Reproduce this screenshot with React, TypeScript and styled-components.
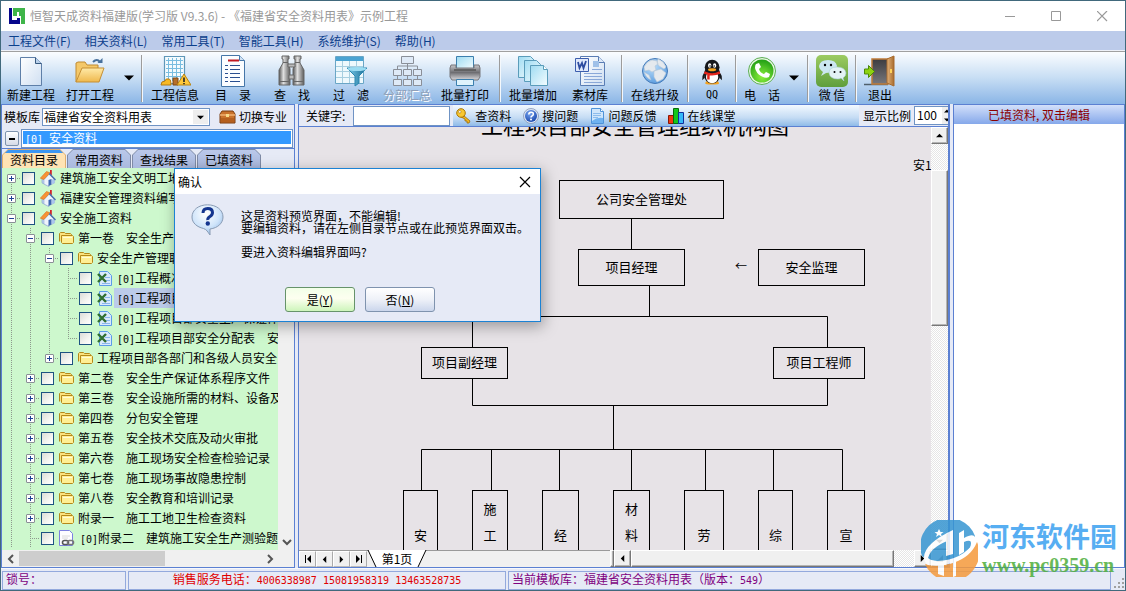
import React from "react";
import styled, { createGlobalStyle, css } from "styled-components";

const BLUE = "#5b80d2";
const FACE = "#e6eaf6";
const GRAY = "#f0f0f0";

const Global = createGlobalStyle`
  *, *::before, *::after { box-sizing: border-box; }
  body { margin: 0; }
  body, button, input, select {
    font-family: "Noto Sans CJK SC", "Liberation Sans", sans-serif;
    font-size: 12px;
    line-height: 16px;
    color: #000;
  }
  button { margin: 0; padding: 0; border: 0; background: none; }
  ul { list-style: none; margin: 0; padding: 0; }
  svg { display: block; flex: none; }
`;

/* ---------- window frame ---------- */
const Window = styled.div`
  position: relative;
  display: flex;
  flex-direction: column;
  min-height: 100vh;
  border: 1px solid #41697c;
  background: ${FACE};
  overflow: hidden;
  white-space: nowrap;
`;
const TitleBar = styled.header`
  display: flex;
  align-items: center;
  height: 30px;
  padding-left: 8px;
  background: #fff;
  color: #999;
`;
const TitleText = styled.h1`
  flex: 1;
  margin: 0 0 0 5px;
  font-size: 12px;
  font-weight: 400;
`;
const CaptionButton = styled.button`
  display: flex;
  align-items: center;
  justify-content: center;
  width: 46px;
  height: 28px;
`;
const MenuBar = styled.nav`
  display: flex;
  align-items: center;
  gap: 14px;
  height: 19px;
  padding-left: 7px;
  background: #bccbea;
  button { color: #0c408c; }
`;
const Toolbar = styled.div`
  display: flex;
  height: 54px;
  padding-left: 1px;
  border-top: 1px solid #eef1f8;
  background: linear-gradient(#a0a0a0 1px, #fbfdff 1px, #c8def4 50%, #8ab5e6);
`;
const ToolButton = styled.button<{ $w: number }>`
  display: flex;
  flex-direction: column;
  align-items: center;
  flex: none;
  width: ${(p) => p.$w}px;
  padding-top: 4px;
  &:disabled { color: #8f9fb8; text-shadow: 1px 1px 0 #fff; }
`;
const DropButton = styled.button<{ $w: number }>`
  display: flex;
  align-items: center;
  justify-content: center;
  width: ${(p) => p.$w}px;
`;
const Separator = styled.span`
  width: 2px;
  height: 47px;
  margin: 4px 3px 0;
  background: linear-gradient(90deg, #9c9c9c 50%, #f4f8fc 50%);
`;

/* ---------- body ---------- */
const Body = styled.div`
  flex: 1;
  display: grid;
  grid-template-columns: 294px minmax(0, 1fr) 172px;
  column-gap: 3px;
`;
const Panel = styled.section<{ $thick?: boolean }>`
  display: flex;
  flex-direction: column;
  min-width: 0;
  border: 1px solid ${BLUE};
  border-right-width: ${(p) => (p.$thick ? 2 : 1)}px;
`;
const TemplateRow = styled.div`
  display: flex;
  align-items: center;
  height: 24px;
  padding-left: 2px;
`;
const SelectBox = styled.span`
  position: relative;
  width: 168px;
  margin: 0 9px 0 2px;
  select {
    display: block;
    width: 100%;
    height: 18px;
    padding: 0 0 1px 1px;
    border: 1px solid #6f93c4;
    background: #fff;
    appearance: none;
    border-radius: 0;
    outline: 0;
  }
`;
const SelectArrow = styled.span`
  position: absolute;
  right: 2px;
  top: 2px;
  display: flex;
  align-items: center;
  justify-content: center;
  width: 15px;
  height: 14px;
  background: #eee;
  pointer-events: none;
`;
const LinkButton = styled.button`
  display: flex;
  align-items: center;
  gap: 3px;
`;
const LibraryRow = styled.div`
  display: flex;
  height: 19px;
  padding: 0 1px 0 3px;
  gap: 2px;
`;
const CollapseButton = styled.button`
  display: flex;
  align-items: center;
  justify-content: center;
  width: 14px;
  height: 15px;
  margin-top: 2px;
  border: 1px solid #7e93ad;
  border-radius: 2px;
  background: linear-gradient(#fff, #d5dbe8);
`;
const LibraryList = styled.ul`
  flex: 1;
  padding: 1px;
  border: 1px solid #6f93c4;
  background: #fff;
  li {
    height: 13px;
    padding-left: 2px;
    line-height: 13px;
    background: #3399ff;
    color: #fff;
  }
`;
const Tabs = styled.div`
  display: flex;
  gap: 1px;
  height: 20px;
  border-top: 1px solid ${BLUE};
`;
const Tab = styled.button<{ $active?: boolean }>`
  position: relative;
  z-index: 0;
  width: 64px;
  height: 19px;
  padding-top: 2px;
  background: ${(p) => (p.$active ? "#e0b070" : "#7f8ba6")};
  clip-path: polygon(0 6px, 6px 0, 58px 0, 100% 6px, 100% 100%, 0 100%);
  &::before {
    content: "";
    position: absolute;
    z-index: -1;
    inset: 1px 1px 0;
    background: ${(p) =>
      p.$active
        ? "linear-gradient(#3b96f3 3px, #ffe3b4 3px)"
        : "linear-gradient(#bac8ea, #aab9de)"};
    clip-path: polygon(0 5px, 5px 0, 57px 0, 100% 5px, 100% 100%, 0 100%);
  }
`;

/* ---------- tree ---------- */
const TreeArea = styled.div`
  flex: 1;
  display: flex;
  min-height: 382px;
`;
const Tree = styled.ul`
  flex: 1;
  min-width: 0;
  overflow: hidden;
  background: #cdf8cd;
`;
const TreeRow = styled.li`
  display: flex;
  align-items: center;
  height: 20px;
`;
const dots = "repeating-linear-gradient(#8d9a8d 0 1px, transparent 1px 2px)";
const dotsX = "repeating-linear-gradient(90deg, #8d9a8d 0 1px, transparent 1px 2px)";
const Guide = styled.span<{ $part?: "full" | "top" | "bottom"; $own?: boolean }>`
  display: flex;
  align-items: center;
  justify-content: center;
  flex: none;
  width: 19px;
  height: 20px;
  background:
    ${dots} 9px ${(p) => (p.$part === "bottom" ? "10px" : "0")} / 1px
      ${(p) => (p.$part === "full" || !p.$part ? "20px" : "10px")} no-repeat
    ${(p) => p.$own && css`, ${dotsX} 9px 10px / 10px 1px no-repeat`};
`;
const Expander = styled.button`
  display: flex;
  align-items: center;
  justify-content: center;
  width: 9px;
  height: 9px;
  border: 1px solid #8a8f96;
  border-radius: 1px;
  background: #fff;
`;
const NodeLabel = styled.label`
  display: flex;
  align-items: center;
  height: 20px;
`;
const Check = styled.input`
  appearance: none;
  flex: none;
  width: 13px;
  height: 13px;
  margin: 0 5px 0 1px;
  border: 1px solid #1d5281;
  background: linear-gradient(135deg, #dcdcd7, #f4f4f1 60%, #fff);
`;
const NodeText = styled.span<{ $selected?: boolean; $leaf?: boolean }>`
  height: 20px;
  margin-left: ${(p) => (p.$leaf ? 2 : 4)}px;
  padding: 0 3px 0 ${(p) => (p.$leaf ? 3 : 0)}px;
  line-height: 20px;
  background: ${(p) => (p.$selected ? "#bccbea" : "none")};
`;
const Num = styled.span`
  font-family: "DejaVu Sans Mono", monospace;
  font-size: 10px;
`;
const FlatScroll = styled.div<{ $vertical?: boolean }>`
  display: flex;
  flex-direction: ${(p) => (p.$vertical ? "column" : "row")};
  justify-content: ${(p) => (p.$vertical ? "flex-end" : "flex-start")};
  flex: none;
  width: ${(p) => (p.$vertical ? "16px" : "auto")};
  height: ${(p) => (p.$vertical ? "auto" : "17px")};
  padding-right: ${(p) => (p.$vertical ? 0 : 16)}px;
  background: ${GRAY};
`;
const FlatArrow = styled.button`
  display: flex;
  align-items: center;
  justify-content: center;
  width: 17px;
  height: 17px;
`;
const FlatThumb = styled.span`
  width: 146px;
  height: 15px;
  margin: 1px auto 0 0;
  background: #cdcdcd;
`;

/* ---------- preview ---------- */
const FilterRow = styled.div`
  display: flex;
  height: 22px;
  border-bottom: 1px solid ${BLUE};
  overflow: hidden;
`;
const FieldLabel = styled.label`
  display: flex;
  align-items: center;
  gap: 8px;
  padding-left: 7px;
`;
const SearchInput = styled.input`
  width: 97px;
  height: 20px;
  margin-right: 3px;
  border: 1px solid #6f93c4;
  background: #fff;
  outline: 0;
`;
const LinkStrip = styled.div`
  flex: 1;
  display: flex;
  align-items: center;
  gap: 12px;
  padding-left: 3px;
  background: linear-gradient(#f3f9ff, #c5dcf4 60%, #8fbbe8);
`;
const ZoomLabel = styled.label`
  display: flex;
  align-items: center;
  gap: 3px;
  padding-left: 4px;
`;
const ZoomBox = styled.span`
  display: flex;
  width: 34px;
  height: 19px;
  border: 1px solid #6f93c4;
  border-right: 0;
  background: #fff;
  overflow: hidden;
  input {
    width: 27px;
    height: 16px;
    padding: 0 0 0 2px;
    border: 0;
    outline: 0;
    background: none;
  }
`;
const Spinner = styled.span`
  display: flex;
  flex-direction: column;
  justify-content: space-around;
  width: 6px;
  padding-left: 2px;
  background: #eee;
`;
const Preview = styled.div`
  flex: 1;
  display: flex;
  min-height: 423px;
`;
const Sheet = styled.div`
  position: relative;
  flex: 1;
  overflow: hidden;
  background: #e7e3e7;
`;
const SheetTitle = styled.h2`
  position: absolute;
  left: 182px;
  top: -14px;
  margin: 0;
  font-size: 22px;
  font-weight: 400;
  line-height: 22px;
`;
const SheetNote = styled.span<{ $x: number; $y: number }>`
  position: absolute;
  left: ${(p) => p.$x}px;
  top: ${(p) => p.$y}px;
  font-size: 12px;
`;
const Wires = styled.svg`
  position: absolute;
  left: 0;
  top: 0;
`;
const OrgNode = styled.div<{ $x: number; $y: number; $w: number; $h: number; $tall?: boolean }>`
  position: absolute;
  left: ${(p) => p.$x}px;
  top: ${(p) => p.$y}px;
  width: ${(p) => p.$w}px;
  height: ${(p) => p.$h}px;
  display: flex;
  flex-direction: column;
  align-items: center;
  justify-content: ${(p) => (p.$tall ? "flex-end" : "center")};
  padding-bottom: 2px;
  border: 1px solid #000;
  font-size: 13px;
  span { height: 26px; line-height: 26px; }
`;
const dither = css`
  background: repeating-conic-gradient(#fff 0 25%, #e6e6e6 0 50%) 0 0 / 2px 2px;
`;
const VScroll = styled.div`
  display: flex;
  flex-direction: column;
  flex: none;
  width: 17px;
  ${dither}
`;
const raised = css`
  border: 1px solid;
  border-color: #fff #777 #777 #fff;
  box-shadow: inset -1px -1px 0 #b4b4b4;
  background: ${GRAY};
`;
const ClassicButton = styled.button`
  display: flex;
  align-items: center;
  justify-content: center;
  flex: none;
  width: 17px;
  height: 17px;
  ${raised}
`;
const VThumb = styled.span`
  height: 156px;
  margin: 26px 0 auto;
  ${raised}
`;
const SheetFooter = styled.div`
  display: flex;
  height: 17px;
`;
const SheetTabs = styled.div`
  display: flex;
  flex: none;
  width: 311px;
  border-top: 1px solid #9a9a9a;
  background: ${GRAY};
  ${ClassicButton} {
    height: 16px;
    border-color: #fff #aaa #bbb #fff;
    box-shadow: none;
  }
`;
const SheetTab = styled.button`
  position: relative;
  width: 60px;
  height: 16px;
  svg { position: absolute; left: 0; top: -1px; }
  span { position: relative; line-height: 16px; }
`;
const SplitGrip = styled.span`
  width: 4px;
  ${raised}
`;
const HTrack = styled.div`
  flex: 1;
  display: flex;
  ${dither}
`;
const HThumb = styled.span`
  width: 263px;
  ${raised}
`;

/* ---------- right panel and status ---------- */
const FilledHeader = styled.h2`
  height: 19px;
  margin: 0;
  font-size: 12px;
  font-weight: 400;
  line-height: 19px;
  text-align: center;
  color: #8b0000;
  background: linear-gradient(#d3e0fa, #85a8ea);
`;
const FilledBody = styled.div`
  flex: 1;
  background: #fff;
`;
const StatusBar = styled.footer`
  display: grid;
  grid-template-columns: 124px 378px minmax(0, 1fr) 12px;
  gap: 2px;
  height: 22px;
  padding: 2px 0 1px 1px;
  border-top: 1px solid #f6f8fc;
`;
const StatusCell = styled.div<{ $color: string; $center?: boolean }>`
  padding: 0 3px;
  border: 1px solid #93a9dd;
  line-height: 14px;
  color: ${(p) => p.$color};
  text-align: ${(p) => (p.$center ? "center" : "left")};
`;

/* ---------- dialog ---------- */
const Dialog = styled.div`
  position: absolute;
  left: 173px;
  top: 167px;
  width: 367px;
  height: 154px;
  border: 1px solid #1b82d4;
  background: ${FACE};
  box-shadow: 2px 4px 14px rgba(0, 0, 0, 0.35);
`;
const DialogTitle = styled.div`
  display: flex;
  align-items: center;
  justify-content: space-between;
  height: 25px;
  padding: 0 9px 0 3px;
  background: #fff;
`;
const DialogContent = styled.div`
  display: flex;
  gap: 17px;
  padding: 10px 0 0 16px;
  p {
    margin: 6px 0 12px;
    line-height: 12px;
  }
  p + p { margin: 0; }
`;
const DialogActions = styled.div`
  display: flex;
  gap: 10px;
  padding: 29px 0 0 110px;
`;
const DialogButton = styled.button<{ $primary?: boolean }>`
  width: 70px;
  height: 25px;
  border: 1px solid ${(p) => (p.$primary ? "#66936a" : "#7f93ae")};
  border-radius: 3px;
  background: ${(p) =>
    p.$primary ? "linear-gradient(#f2ffe8, #fdfff0 45%, #cdf5bb)" : "linear-gradient(#fff, #eef1f8 50%, #cbd6ec)"};
`;

/* ---------- watermark ---------- */
const Watermark = styled.div`
  position: absolute;
  right: 8px;
  bottom: 12px;
  display: flex;
  gap: 4px;
  opacity: 0.85;
  pointer-events: none;
`;
const WatermarkText = styled.div`
  strong {
    display: block;
    font-size: 27px;
    line-height: 32px;
    color: #3aa0f0;
  }
  em {
    display: block;
    font: 700 20px/26px "Liberation Serif", serif;
    color: #4fae3c;
  }
`;

/* ---------- icons ---------- */
const Arrow = ({ d, size = 7, color = "#000" }: { d: "up" | "down" | "left" | "right"; size?: number; color?: string }) => {
  const paths = { up: "M0 6 4 2 8 6z", down: "M0 2h8L4 6z", left: "M6 0v8L2 4z", right: "M2 0v8l4-4z" };
  return (
    <svg width={size} height={size} viewBox="0 0 8 8"><path d={paths[d]} fill={color} /></svg>
  );
};
const Chevron = ({ d }: { d: "down" | "left" | "right" }) => {
  const paths = { down: "M1 3l4 4 4-4", left: "M7 1 3 5l4 4", right: "M3 1l4 4-4 4" };
  return (
    <svg width="10" height="10" viewBox="0 0 10 10"><path d={paths[d]} fill="none" stroke="#555" strokeWidth="2" /></svg>
  );
};

const Defs = () => (
  <svg width="0" height="0" style={{ position: "absolute" }} aria-hidden="true">
    <defs>
      <linearGradient id="paper" x1="0" y1="0" x2="1" y2="1"><stop offset="0" stopColor="#fff" /><stop offset="1" stopColor="#cfdff2" /></linearGradient>
      <linearGradient id="cyan" x1="0" y1="0" x2="1" y2="1"><stop offset="0" stopColor="#9fdcf2" /><stop offset="1" stopColor="#f4fcff" /></linearGradient>
      <linearGradient id="gold" x1="0" y1="0" x2="0" y2="1"><stop offset="0" stopColor="#ffeaa8" /><stop offset="1" stopColor="#efb84c" /></linearGradient>
      <linearGradient id="metal" x1="0" y1="0" x2="1" y2="0"><stop offset="0" stopColor="#555" /><stop offset=".4" stopColor="#e0e0e0" /><stop offset="1" stopColor="#5c5c5c" /></linearGradient>
      <linearGradient id="print" x1="0" y1="0" x2="0" y2="1"><stop offset="0" stopColor="#c8c8cc" /><stop offset=".5" stopColor="#6e6e72" /><stop offset="1" stopColor="#d8d8dc" /></linearGradient>
      <linearGradient id="funnel" x1="0" y1="0" x2="1" y2="0"><stop offset="0" stopColor="#7fd0ee" /><stop offset="1" stopColor="#12668f" /></linearGradient>
      <radialGradient id="globe" cx=".4" cy=".3" r=".7"><stop offset="0" stopColor="#bfe0fb" /><stop offset="1" stopColor="#5f9fe0" /></radialGradient>
      <radialGradient id="green" cx=".5" cy=".75" r=".7"><stop offset="0" stopColor="#8cf03c" /><stop offset="1" stopColor="#27a317" /></radialGradient>
      <linearGradient id="wechat" x1="0" y1="0" x2="0" y2="1"><stop offset="0" stopColor="#9ccb62" /><stop offset="1" stopColor="#5f9e3c" /></linearGradient>
      <linearGradient id="wood" x1="0" y1="0" x2="1" y2="0"><stop offset="0" stopColor="#e2b27a" /><stop offset="1" stopColor="#a86c2e" /></linearGradient>
      <linearGradient id="dark" x1="0" y1="0" x2="0" y2="1"><stop offset="0" stopColor="#3c3c40" /><stop offset="1" stopColor="#77777c" /></linearGradient>
      <radialGradient id="bubble" cx=".45" cy=".3" r=".75"><stop offset="0" stopColor="#fff" /><stop offset=".6" stopColor="#cfe4fa" /><stop offset="1" stopColor="#8bb4e2" /></radialGradient>
      <radialGradient id="help" cx=".4" cy=".3" r=".7"><stop offset="0" stopColor="#7aa6f0" /><stop offset="1" stopColor="#1c4bb0" /></radialGradient>
    </defs>
  </svg>
);

const Icon32 = ({ children }: { children: React.ReactNode }) => (
  <svg width="32" height="32" viewBox="0 0 32 32">{children}</svg>
);

const icons: Record<string, React.ReactNode> = {
  newFile: <><path d="M5.500 2.500h15l6 6v22h-21z" fill="url(#paper)" stroke="#5e7fa8" /><path d="M20.500 2.500v6h6" fill="#b9d0ea" stroke="#37597f" /></>,
  open: <><path d="M2 27V8l2-1h7l2 3h11v4" fill="#f4c869" stroke="#c08a30" /><path d="M2 27l6-14h22l-5 14z" fill="url(#gold)" stroke="#c58f35" /><path d="M19 7q4-4 7 0" fill="none" stroke="#47709c" strokeWidth="2" /><path d="M23.500 8h5V3z" fill="#47709c" /></>,
  info: <><path d="M5.500 1.500h20v27h-20z" fill="#f4fbfe" stroke="#5f97b8" strokeWidth="1.200" /><path d="M7 5.500h17M7 9.500h17M7 13.500h17M7 17.500h17M7 21.500h17M9.500 3v23M13.500 3v23M17.500 3v23M21.500 3v23" stroke="#79bde0" /><path d="M2 30q0-4 4-4 1-3 3-2 3-1 3 6z" fill="#f7b924" stroke="#b57a10" /><path d="M14 23h5v7h-5z" fill="#b56f2a" stroke="#7d4716" /><path d="M25 19l7 11H18z" fill="#ffc83a" stroke="#b8820e" /><path d="M25 22.500v4.500M25 28v1.200" stroke="#222" strokeWidth="1.600" /></>,
  list: <><path d="M4.500.500h18l5 5v26h-23z" fill="#fbfdff" stroke="#4576a8" /><path d="M22.500.500v5h5" fill="#cfe2f4" stroke="#4576a8" /><path d="M11 5.500h11" stroke="#c01822" strokeWidth="2" /><path d="M8 10.500h3M8 14.500h3M8 18.500h3M8 22.500h3M8 26.500h3M13 10.500h10M13 14.500h10M13 18.500h10M13 22.500h10M13 26.500h10" stroke="#2a4f90" /></>,
  find: <><path d="M6 1h7v3h-1v4l2 6v16H3V15l4-7V4H6z" fill="url(#metal)" stroke="#666" /><path d="M18 1h7v3h-1v4l4 7v15H17V14l2-6V4h-1z" fill="url(#metal)" stroke="#666" /><path d="M12 9h7v3h-7zM13 20h5v4h-5z" fill="#bbb" stroke="#666" /><path d="M3 26.500h11M17 26.500h11M7 7.500h5M19 7.500h5" stroke="#666" /></>,
  filter: <><path d="M.500 1.500h28v27H.500z" fill="#eef9fd" stroke="#6aa6c6" /><path d="M1 2h27v4H1z" fill="#4aa3d2" /><path d="M1 11.500h27M1 16.500h27M1 22.500h27M7.500 6v22M14.500 6v22M21.500 6v22" stroke="#a8cfe0" /><path d="M12 13h20l-8 8v7l-4 3V21z" fill="url(#funnel)" stroke="#2b87b0" /><ellipse cx="22" cy="14" rx="9.500" ry="2" fill="#9bdcf2" /></>,
  chart: <g fill="#dfeaf7" stroke="#8a8f98"><path d="M16.500 8.500v6M6.500 14v-3h20v3M6.500 21v3M16.500 21v3M26.500 21v3" fill="none" /><path d="M10.500 1.500h12v7h-12zM2.500 14.500h8v6h-8zM12.500 14.500h8v6h-8zM22.500 14.500h8v6h-8zM2.500 24.500h8v6h-8zM12.500 24.500h8v6h-8zM22.500 24.500h8v6h-8z" /></g>,
  printer: <><path d="M7.500 1.500h17v13h-17z" fill="url(#cyan)" stroke="#3b7fae" /><path d="M2 10h5v3h18v-3h5l1 3v9l-2 3H3l-2-3v-9z" fill="url(#print)" stroke="#77777b" /><path d="M5 15h22" stroke="#555" strokeWidth="1.500" /><path d="M7.500 24.500h17v6h-17z" fill="#dff3fc" stroke="#3b7fae" /></>,
  copies: <g stroke="#5a9cba"><path d="M1.500 1.500h12l4 4v17h-16z" fill="url(#cyan)" /><path d="M7.500 5.500h12l4 4v17h-16z" fill="url(#cyan)" /><path d="M13.500 10.500h13l4 4v16h-17z" fill="url(#cyan)" /><path d="M26.500 10.500v4h4" fill="#fff" /></g>,
  word: <><path d="M6.500 1.500h18l6 6v23h-24z" fill="url(#paper)" stroke="#5a7db4" /><path d="M24.500 1.500v6h6" fill="#dce8f8" stroke="#5a7db4" /><path d="M19 6h6v6h-6z" fill="#9fc0e8" /><path d="M18 14.500h10M10 18.500h18M10 21.500h18M10 24.500h18M10 27.500h18" stroke="#8aa8d8" /><path d="M1.500 3.500h13v13h-13z" fill="#dfe8fb" stroke="#3c5eae" /><path d="M4 7l1.500 6L8 8l1.500 5L12 6" fill="none" stroke="#2c4ba0" strokeWidth="1.800" /></>,
  globe: <><circle cx="16" cy="16" r="12.500" fill="url(#globe)" stroke="#4379b8" /><path d="M5 12q3-6 8-7l5 1 1 3-3 2 1 4-4 2-3-2-4 1zM19 4q6 2 8 8l-2 2-5-3-2-3zM15 16l7-2 5 4-3 6-6 3-3-5zM5 17l5 3 2 5q-5-2-7-8z" fill="#e4e9ee" stroke="#b6c6d6" strokeWidth=".6" /></>,
  qq: <g transform="translate(3 4) scale(.82)"><path d="M9 27q-4 4 3 4h8q7 0 3-4z" fill="#f5a21c" /><path d="M6 17q-3 4-2 9l3-3M26 17q3 4 2 9l-3-3" fill="#16181c" /><ellipse cx="16" cy="19" rx="10" ry="11" fill="#16181c" /><ellipse cx="16" cy="22" rx="7.500" ry="7.500" fill="#fff" /><ellipse cx="16" cy="10" rx="9" ry="9" fill="#16181c" /><ellipse cx="13" cy="8" rx="2" ry="2.800" fill="#fff" /><ellipse cx="19" cy="8" rx="2" ry="2.800" fill="#fff" /><circle cx="13.500" cy="8.500" r=".9" /><circle cx="18.500" cy="8.500" r=".9" /><ellipse cx="16" cy="13" rx="5" ry="1.800" fill="#f7a51d" /><path d="M7 15q9 5 18 0l1 3q-5 2-10 2h-3v5h-3v-6q-2 0-4-1z" fill="#e3241b" /></g>,
  phone: <><circle cx="16" cy="16" r="13.500" fill="#e9f7e3" stroke="#5cae54" /><circle cx="16" cy="16" r="11.500" fill="url(#green)" /><path d="M10 9l3-1 2 4-2 2q1 4 5 5l2-2 4 2-1 3q-3 2-8-1t-6-8q0-3 1-4z" fill="#fff" /></>,
  wechat: <><rect x="0" y="0" width="32" height="32" rx="5" fill="url(#wechat)" /><path d="M5 21l2-4q-4-3-4-6 1-6 9-6t9 6q-1 7-11 7z" fill="#cbe6f0" /><path d="M28 26l-1-3q3-2 3-5-1-6-9-6t-8 6q1 6 9 6 2 0 3-1z" fill="#e3f2f5" stroke="#a7cfd4" strokeWidth=".6" /><circle cx="9" cy="10" r="1.200" /><circle cx="15" cy="10" r="1.200" /><circle cx="18.500" cy="17" r="1" /><circle cx="24.500" cy="17" r="1" /></>,
  exit: <><path d="M0 29.500h24" stroke="#50606c" strokeWidth="1.500" /><path d="M8 4h16v25H8z" fill="url(#dark)" stroke="#c07c3a" strokeWidth="1.500" /><path d="M23 4l7-3v30l-7-3z" fill="url(#wood)" stroke="#a86a2c" /><path d="M27 14v4" stroke="#ffd35a" strokeWidth="2" /><path d="M.500 14h4v-3.500l6 6-6 6V19h-4z" fill="#8ed311" stroke="#4c8a08" /></>,
};

const HouseIcon = () => (
  <svg width="16" height="17" viewBox="0 0 16 17">
    <path d="M2 8.500 4.500 8 9 12v4.500L2 13z" fill="#b9cfee" stroke="#7b96c6" strokeWidth=".5" />
    <path d="M4 9.500 9.500 4l5 5.500V13L8 16l-4-2z" fill="#eef4fc" stroke="#8aa2cc" strokeWidth=".5" />
    <path d="M8.500 10l3-1v5.500l-3 1.500z" fill="#3e68b0" />
    <path d="M12 9.500l2.500-.5V13L12 14z" fill="#a9c6ee" />
    <path d="M10 0h1.800v5H10z" fill="#d3222a" />
    <path d="M.300 8.200 6.500 1.500 10 2.800 3.800 9.500z" fill="#f79236" stroke="#d96f1b" strokeWidth=".6" />
    <path d="M9.500 2.800 16 9.500l-1 1-6-6z" fill="#4a6fae" />
  </svg>
);
const FolderIcon = () => (
  <svg width="15" height="14" viewBox="0 0 15 14">
    <path d="M.500 10.500v-8l1-1h4l1 1h5l1 1v2" fill="#fbe27e" stroke="#b5881a" />
    <path d="M2.500 4.500h11l1 1v6l-1 1h-10l-1-1z" fill="#ffef94" stroke="#b5881a" /><path d="M4 6.500h9" stroke="#fffbd8" />
  </svg>
);
const ExcelIcon = () => (
  <svg width="15" height="15" viewBox="0 0 15 15">
    <path d="M2.500.500h8l4 4v10h-12z" fill="#d9e9fb" stroke="#5c9be8" /><path d="M8 6.500h5M8 9.500h5M5 12.500h8" stroke="#8ab6ec" />
    <path d="M1 3l8 8M9 3l-8 8" stroke="#2f6f30" strokeWidth="2.400" />
  </svg>
);
const LinkedDocIcon = () => (
  <svg width="16" height="16" viewBox="0 0 16 16">
    <path d="M.500.500h10l3 3v12h-13z" fill="#fdfdff" stroke="#7c80e0" /><path d="M3 6h8M3 8h6" stroke="#dadada" />
    <rect x="3.500" y="10.500" width="6" height="4" rx="2" fill="none" stroke="#555" strokeWidth="1.600" />
    <rect x="8.500" y="10.500" width="6" height="4" rx="2" fill="none" stroke="#777" strokeWidth="1.600" />
  </svg>
);
const ChestIcon = () => (
  <svg width="17" height="14" viewBox="0 0 17 14">
    <path d="M1 4l2-3h11l2 3v9H1z" fill="#c9732c" stroke="#7b3d10" /><path d="M1 5h15" stroke="#f0b070" strokeWidth="1.500" />
    <path d="M7 4h3v3H7z" fill="#f7dc8a" /><path d="M2 8h13v4H2z" fill="#b5601f" />
  </svg>
);
const KeyIcon = () => (
  <svg width="16" height="16" viewBox="0 0 16 16">
    <path d="M7 7l7 6-1 2h-2v-2H9v-2L5 9z" fill="#f4b81e" stroke="#9a6a08" strokeWidth=".8" />
    <circle cx="5" cy="5" r="4.300" fill="#f9c831" stroke="#a87408" /><circle cx="3.800" cy="3.800" r="1.300" fill="#fff" stroke="#a87408" strokeWidth=".6" />
  </svg>
);
const HelpIcon = () => (
  <svg width="16" height="16" viewBox="0 0 16 16">
    <circle cx="8" cy="8" r="7.500" fill="#dbe6f6" stroke="#8796b4" strokeWidth=".8" /><circle cx="8" cy="8" r="6" fill="url(#help)" />
    <path d="M5.800 6.500q0-2.300 2.300-2.300t2.200 2q0 1-1.200 1.700T8 9.500" fill="none" stroke="#fff" strokeWidth="1.600" /><circle cx="8" cy="11.600" r="1" fill="#fff" />
  </svg>
);
const NoteIcon = () => (
  <svg width="15" height="16" viewBox="0 0 15 16">
    <path d="M1.500.500h9l3 3v12h-12z" fill="#cfe6fb" stroke="#4f93d8" /><path d="M10.500.500v3h3" fill="#fff" stroke="#4f93d8" />
    <path d="M3 5.500h8M3 7.500h8M3 9.500h5" stroke="#8cbcec" /><path d="M2 13q5-4 11-3v5H2z" fill="#6fb2f0" />
  </svg>
);
const BarsIcon = () => (
  <svg width="16" height="16" viewBox="0 0 16 16">
    <path d="M.500 7.500h5v8h-5z" fill="#f03a12" stroke="#8c1604" /><path d="M5.500.500h5v15h-5z" fill="#12c81c" stroke="#066b0c" />
    <path d="M10.500 4.500h5v11h-5z" fill="#35b8f8" stroke="#102f9c" />
  </svg>
);

/* ---------- data ---------- */
const D = "\u3000";
type Tool = { w: number; label?: string; icon?: string; drop?: boolean; disabled?: boolean; num?: boolean };
const tools: Tool[] = [
  { w: 58, label: "新建工程", icon: "newFile" },
  { w: 60, label: "打开工程", icon: "open" },
  { w: 18, drop: true },
  { w: 0 },
  { w: 58, label: "工程信息", icon: "info" },
  { w: 58, label: `目${D}录`, icon: "list" },
  { w: 60, label: `查${D}找`, icon: "find" },
  { w: 58, label: `过${D}滤`, icon: "filter" },
  { w: 54, label: "分部汇总", icon: "chart", disabled: true },
  { w: 62, label: "批量打印", icon: "printer" },
  { w: 0 },
  { w: 58, label: "批量增加", icon: "copies" },
  { w: 56, label: "素材库", icon: "word" },
  { w: 0 },
  { w: 58, label: "在线升级", icon: "globe" },
  { w: 0 },
  { w: 40, label: "QQ", icon: "qq", num: true },
  { w: 0 },
  { w: 44, label: `电${D}话`, icon: "phone" },
  { w: 20, drop: true },
  { w: 0 },
  { w: 40, label: "微 信", icon: "wechat" },
  { w: 0 },
  { w: 40, label: "退出", icon: "exit" },
];

type Row = { level: number; text: string; kind: "house" | "folder" | "excel" | "link"; open?: boolean; selected?: boolean; part?: "top" | "bottom" };
const rows: Row[] = [
  { level: 0, text: "建筑施工安全文明工地", kind: "house", part: "bottom" },
  { level: 0, text: "福建安全管理资料编写指南", kind: "house" },
  { level: 0, text: "安全施工资料", kind: "house", open: true },
  { level: 1, text: `第一卷${D}安全生产管理`, kind: "folder", open: true },
  { level: 2, text: "安全生产管理职责", kind: "folder", open: true },
  { level: 3, text: "工程概况", kind: "excel" },
  { level: 3, text: "工程项目部安全管理组织", kind: "excel", selected: true },
  { level: 3, text: "工程项目部安全生产保证体", kind: "excel" },
  { level: 3, text: `工程项目部安全分配表${D}安`, kind: "excel", part: "top" },
  { level: 2, text: "工程项目部各部门和各级人员安全", kind: "folder", part: "top" },
  { level: 1, text: `第二卷${D}安全生产保证体系程序文件`, kind: "folder" },
  { level: 1, text: `第三卷${D}安全设施所需的材料、设备及`, kind: "folder" },
  { level: 1, text: `第四卷${D}分包安全管理`, kind: "folder" },
  { level: 1, text: `第五卷${D}安全技术交底及动火审批`, kind: "folder" },
  { level: 1, text: `第六卷${D}施工现场安全检查检验记录`, kind: "folder" },
  { level: 1, text: `第七卷${D}施工现场事故隐患控制`, kind: "folder" },
  { level: 1, text: `第八卷${D}安全教育和培训记录`, kind: "folder" },
  { level: 1, text: `附录一${D}施工工地卫生检查资料`, kind: "folder" },
  { level: 1, text: `附录二${D}建筑施工安全生产测验题`, kind: "link" },
];
const kindIcon = { house: <HouseIcon />, folder: <FolderIcon />, excel: <ExcelIcon />, link: <LinkedDocIcon /> };

const nodes = [
  { x: 260, y: 53, w: 165, h: 39, t: "公司安全管理处" },
  { x: 279, y: 122, w: 107, h: 37, t: "项目经理" },
  { x: 459, y: 122, w: 107, h: 37, t: "安全监理" },
  { x: 122, y: 220, w: 87, h: 32, t: "项目副经理" },
  { x: 474, y: 220, w: 92, h: 32, t: "项目工程师" },
];
const departments = [
  { x: 104, w: 35, t: "安" },
  { x: 173, w: 36, t: "施工" },
  { x: 243, w: 37, t: "经" },
  { x: 314, w: 37, t: "材料" },
  { x: 385, w: 40, t: "劳" },
  { x: 459, w: 35, t: "综" },
  { x: 528, w: 38, t: "宣" },
];
const wires =
  "M332.500 92v30M350.500 159v30M173.500 220v-30.500h355V220M173.500 252v26.500h355V252M314.500 278v44M122.500 363v-40.500h421V363M192.500 323v40M260.500 323v40M332.500 323v40M406.500 323v40M474.500 323v40";

export default function App() {
  return (
    <>
      <Global />
      <Defs />
      <Window>
        <TitleBar>
          <svg width="16" height="16" viewBox="0 0 16 16">
            <path d="M0 0h3v12h5v-2h3v6H0z" fill="#06068c" />
            <path d="M4 0h12v16h-4V8h-2V4H8v4H4z" fill="#3fb549" />
          </svg>
          <TitleText>恒智天成资料福建版(学习版 V9.3.6) - 《福建省安全资料用表》示例工程</TitleText>
          <CaptionButton aria-label="最小化"><svg width="11" height="11"><path d="M0 5.500h10" stroke="#999" /></svg></CaptionButton>
          <CaptionButton aria-label="最大化"><svg width="11" height="11"><path d="M.5.500h9v9h-9z" fill="none" stroke="#999" /></svg></CaptionButton>
          <CaptionButton aria-label="关闭"><svg width="11" height="11"><path d="M0 0l10 10M10 0 0 10" stroke="#999" strokeWidth="1.200" /></svg></CaptionButton>
        </TitleBar>
        <MenuBar>
          {["工程文件(F)", "相关资料(L)", "常用工具(T)", "智能工具(H)", "系统维护(S)", "帮助(H)"].map((m) => <button key={m}>{m}</button>)}
        </MenuBar>
        <Toolbar>
          {tools.map((t, i) =>
            t.drop ? (
              <DropButton key={i} $w={t.w} aria-label="更多"><Arrow d="down" size={10} /></DropButton>
            ) : t.label ? (
              <ToolButton key={i} $w={t.w} disabled={t.disabled}>
                <Icon32>{icons[t.icon!]}</Icon32>
                {t.num ? <Num>{t.label}</Num> : t.label}
              </ToolButton>
            ) : (
              <Separator key={i} />
            )
          )}
        </Toolbar>

        <Body>
          <Panel>
            <TemplateRow>
              <label htmlFor="template">模板库</label>
              <SelectBox>
                <select id="template"><option>福建省安全资料用表</option></select>
                <SelectArrow><Arrow d="down" /></SelectArrow>
              </SelectBox>
              <LinkButton><ChestIcon />切换专业</LinkButton>
            </TemplateRow>
            <LibraryRow>
              <CollapseButton aria-label="折叠"><svg width="6" height="2"><path d="M0 1h6" stroke="#000" strokeWidth="2" /></svg></CollapseButton>
              <LibraryList><li><Num>[0] </Num>安全资料</li></LibraryList>
            </LibraryRow>
            <Tabs>
              {["资料目录", "常用资料", "查找结果", "已填资料"].map((t, i) => <Tab key={t} $active={i === 0}>{t}</Tab>)}
            </Tabs>
            <TreeArea>
              <Tree>
                {rows.map((r, i) => {
                  const leaf = r.kind === "excel" || r.kind === "link";
                  return (
                    <TreeRow key={i}>
                      {Array.from({ length: r.level }, (_, g) => <Guide key={g} />)}
                      <Guide $own $part={r.part ?? "full"}>
                        {!leaf && (
                          <Expander aria-label={r.open ? "折叠" : "展开"}>
                            <svg width="5" height="5"><path d={r.open ? "M0 2.500h5" : "M0 2.500h5M2.500 0v5"} stroke="#1d3f94" /></svg>
                          </Expander>
                        )}
                      </Guide>
                      <NodeLabel>
                        <Check type="checkbox" />
                        {kindIcon[r.kind]}
                        <NodeText $selected={r.selected} $leaf={leaf}>{leaf && <Num>[0]</Num>}{r.text}</NodeText>
                      </NodeLabel>
                    </TreeRow>
                  );
                })}
              </Tree>
              <FlatScroll $vertical><FlatArrow aria-label="向下滚动"><Chevron d="down" /></FlatArrow></FlatScroll>
            </TreeArea>
            <FlatScroll>
              <FlatArrow aria-label="向左滚动"><Chevron d="left" /></FlatArrow>
              <FlatThumb />
              <FlatArrow aria-label="向右滚动"><Chevron d="right" /></FlatArrow>
            </FlatScroll>
          </Panel>

          <Panel $thick>
            <FilterRow>
              <FieldLabel>关键字: <SearchInput type="text" /></FieldLabel>
              <LinkStrip>
                <LinkButton><KeyIcon />查资料</LinkButton>
                <LinkButton><HelpIcon />搜问题</LinkButton>
                <LinkButton><NoteIcon />问题反馈</LinkButton>
                <LinkButton><BarsIcon />在线课堂</LinkButton>
              </LinkStrip>
              <ZoomLabel>
                显示比例
                <ZoomBox>
                  <input type="text" defaultValue="100" />
                  <Spinner><Arrow d="up" size={6} /><Arrow d="down" size={6} /></Spinner>
                </ZoomBox>
              </ZoomLabel>
            </FilterRow>
            <Preview>
              <Sheet>
                <SheetTitle>工程项目部安全管理组织机构图</SheetTitle>
                <SheetNote $x={614} $y={30}>安1</SheetNote>
                <SheetNote $x={436} $y={131}>←</SheetNote>
                <Wires width="632" height="423"><path d={wires} fill="none" stroke="#000" /></Wires>
                {nodes.map((n) => <OrgNode key={n.t} $x={n.x} $y={n.y} $w={n.w} $h={n.h}>{n.t}</OrgNode>)}
                {departments.map((n) => (
                  <OrgNode key={n.t} $x={n.x} $y={363} $w={n.w} $h={61} $tall>
                    {[...n.t].map((c) => <span key={c}>{c}</span>)}
                  </OrgNode>
                ))}
              </Sheet>
              <VScroll>
                <ClassicButton aria-label="向上滚动"><Arrow d="up" /></ClassicButton>
                <VThumb />
                <ClassicButton aria-label="向下滚动"><Arrow d="down" /></ClassicButton>
              </VScroll>
            </Preview>
            <SheetFooter>
              <SheetTabs>
                <ClassicButton aria-label="首页"><svg width="8" height="8"><path d="M1 0h1v8H1zM7 0v8L3 4z" /></svg></ClassicButton>
                <ClassicButton aria-label="上一页"><Arrow d="left" /></ClassicButton>
                <ClassicButton aria-label="下一页"><Arrow d="right" /></ClassicButton>
                <ClassicButton aria-label="末页"><svg width="8" height="8"><path d="M6 0h1v8H6zM1 0v8l4-4z" /></svg></ClassicButton>
                <SheetTab>
                  <svg width="60" height="17"><path d="M1 0l8 17h42l8-17z" fill="#fff" /><path d="M1 0l8 17M51 17l8-17" stroke="#000" /></svg>
                  <span>第1页</span>
                </SheetTab>
              </SheetTabs>
              <SplitGrip />
              <ClassicButton aria-label="向左滚动"><Arrow d="left" /></ClassicButton>
              <HTrack><HThumb /></HTrack>
              <ClassicButton aria-label="向右滚动"><Arrow d="right" /></ClassicButton>
              <ClassicButton aria-label="调整大小"><svg width="7" height="7"><path d="M7 0v7H0z" fill="#888" /></svg></ClassicButton>
            </SheetFooter>
          </Panel>

          <Panel>
            <FilledHeader>已填资料, 双击编辑</FilledHeader>
            <FilledBody />
          </Panel>
        </Body>

        <StatusBar>
          <StatusCell $color="#800080">锁号：</StatusCell>
          <StatusCell $color="#e00000" $center>销售服务电话：<Num>4006338987 15081958319 13463528735</Num></StatusCell>
          <StatusCell $color="#800080">当前模板库：福建省安全资料用表（版本：<Num>549</Num>）</StatusCell>
          <svg width="12" height="19"><path d="M9 7h2v2H9zM9 11h2v2H9zM9 15h2v2H9zM5 11h2v2H5zM5 15h2v2H5zM1 15h2v2H1z" fill="#a0a0a0" /></svg>
        </StatusBar>

        <Dialog role="dialog" aria-label="确认">
          <DialogTitle>
            确认
            <button aria-label="关闭"><svg width="12" height="12"><path d="M1 1l10 10M11 1 1 11" stroke="#000" strokeWidth="1.200" /></svg></button>
          </DialogTitle>
          <DialogContent>
            <svg width="33" height="32" viewBox="0 0 33 32">
              <path d="M16.500.800C7.500.800 1 6 1 13c0 6 5 10 11.500 11.500 3 1 4 3 6.500 6.500v-6C27 24 32 19 32 13 32 6 25.500.800 16.500.800z" fill="url(#bubble)" stroke="#8a9cb4" />
              <path d="M12 9q0-4.500 4.700-4.500T21.500 8.500q0 2.500-2.500 4t-2.200 3.500" fill="none" stroke="#14358f" strokeWidth="3" /><circle cx="16.800" cy="19.500" r="2.200" fill="#14358f" />
            </svg>
            <div>
              <p>这是资料预览界面，不能编辑!<br />要编辑资料，请在左侧目录节点或在此预览界面双击。</p>
              <p>要进入资料编辑界面吗?</p>
            </div>
          </DialogContent>
          <DialogActions>
            <DialogButton $primary>是(<u>Y</u>)</DialogButton>
            <DialogButton>否(<u>N</u>)</DialogButton>
          </DialogActions>
        </Dialog>

        <Watermark>
          <svg width="57" height="57" viewBox="0 0 57 57">
            <path d="M1 36A28 28 0 0 1 54 16Q48 40 24 41 8 42 1 36z" fill="#3796d2" />
            <path d="M56 22A28 28 0 0 1 4 44q12 4 28-1 18-6 24-21z" fill="#f59a3c" />
            <path d="M3 37Q4 23 32 10v9Q10 26 7 38q3 3 9 3 26-1 38-20-2 12-16 19-16 8-31 5-4-3-4-8z" fill="#fff" />
            <path d="M25 18l7-6v22l-7 2zM38 13l5-3v22l-5 3z" fill="#fff" />
            <path d="M43 18q9-5 11-1 1 5-5 11 2-6 0-7t-6 1z" fill="#fff" />
            <path d="M17 44l6-1v13l-6-2zM32 42l3-1v15l-3 1z" fill="#fff" />
            <path d="M18 9l1.500 3h3l-2.500 2 1 3-3-2-3 2 1-3-2.500-2h3z" fill="#fff" />
          </svg>
          <WatermarkText><strong>河东软件园</strong><em>www.pc0359.cn</em></WatermarkText>
        </Watermark>
      </Window>
    </>
  );
}
